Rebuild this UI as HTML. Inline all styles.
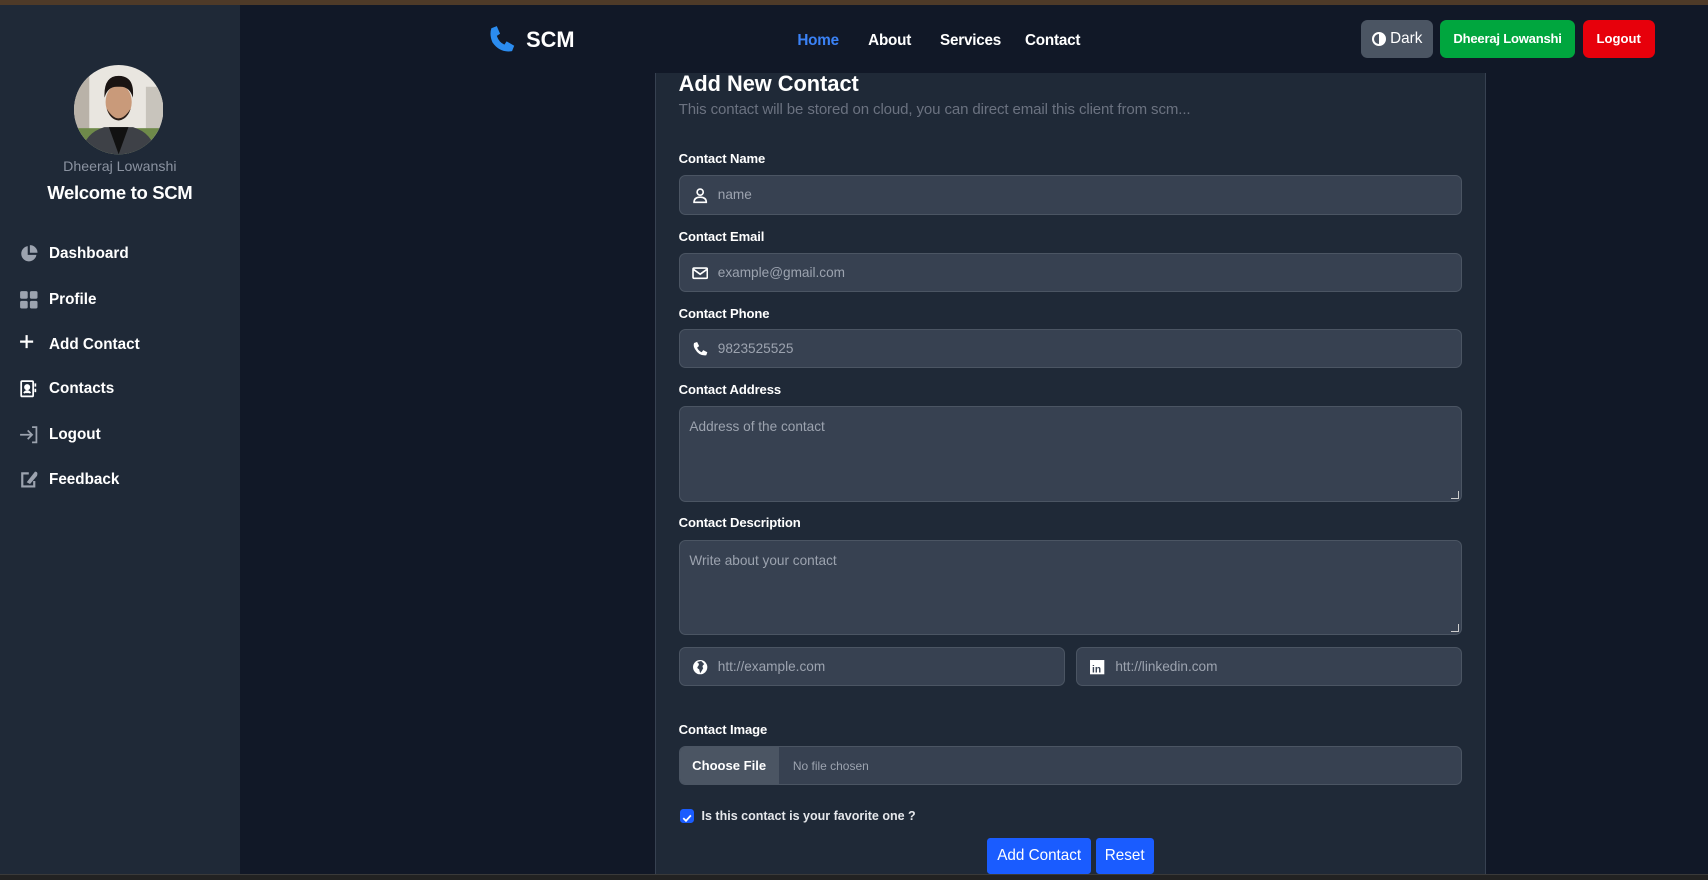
<!DOCTYPE html>
<html><head><meta charset="utf-8"><style>
*{box-sizing:border-box;margin:0;padding:0}
html,body{width:1708px;height:880px;overflow:hidden;background:#111827}
#w{zoom:1.08929;width:1568px;height:808px;position:relative;font-family:"Liberation Sans",sans-serif;color:#fff;background:#111827;overflow:hidden}
.a{position:absolute}
.top{left:0;top:0;width:1568px;height:5px;background:#4e3a28}
.bot{left:0;top:802px;width:1568px;height:6px;background:#222;border-top:1px solid #3a3a3a}
.side{left:0;top:5px;width:220px;height:797px;background:#1f2937}
.mi{position:absolute;left:17px;font-size:14px;font-weight:bold;display:flex;align-items:center}
.mi svg{width:18px;height:18px;margin-right:10px}
.nav{font-size:14px;font-weight:bold;top:29px;letter-spacing:-0.2px}
.btn{top:18px;height:35px;border-radius:6px;font-size:12px;font-weight:bold;display:flex;align-items:center;justify-content:center}
.card{left:601px;top:67px;width:763px;height:735px;background:#1f2937;border-left:1px solid #374151;border-right:1px solid #374151}
.lbl{left:623px;font-size:12px;font-weight:bold;letter-spacing:-0.1px;margin-top:1px}
.in{left:623px;width:719px;height:36px;background:#374151;border:1px solid #4b5563;border-radius:6px;font-size:12.5px;color:#9ca3af;display:flex;align-items:center;padding-left:35px}
.in svg{position:absolute;left:11px;top:10px;width:15px;height:15px}
.ta{align-items:flex-start;padding:11px 9px}
.ta:after{content:"";position:absolute;right:2px;bottom:2px;width:6px;height:6px;border-right:1px solid #ccc;border-bottom:1px solid #ccc}
</style></head><body><div id="w">
<div class="a top"></div>
<div class="a side">
 <svg class="a" style="left:68px;top:55px" width="82" height="82" viewBox="0 0 82 82"><defs><clipPath id="c"><circle cx="41" cy="41" r="41"/></clipPath></defs><g clip-path="url(#c)"><rect width="82" height="82" fill="#e9e6e0"/><rect x="0" y="10" width="14" height="60" fill="#b9b2a8"/><rect x="66" y="20" width="16" height="50" fill="#c8c4bc"/><rect x="0" y="58" width="82" height="24" fill="#6f8a4a"/><path d="M6 82 Q10 62 28 57 L54 57 Q72 62 76 82Z" fill="#3e4147"/><path d="M32 57 L41 82 L50 57Z" fill="#111"/><ellipse cx="41" cy="34" rx="12" ry="16" fill="#c99a7a"/><path d="M28 30 Q27 10 41 10 Q56 10 54 30 Q51 19 41 20 Q31 19 28 30Z" fill="#1a1412"/><path d="M30 40 Q41 58 52 40 Q49 50 41 51 Q33 50 30 40Z" fill="#2a1e18"/></g></svg>
 <div class="a" style="left:0;width:220px;top:141px;text-align:center;font-size:13px;color:#8b93a1">Dheeraj Lowanshi</div>
 <div class="a" style="left:0;width:220px;top:162px;text-align:center;font-size:17px;font-weight:bold;letter-spacing:-0.3px">Welcome to SCM</div>
 <div class="mi" style="top:219px"><svg viewBox="0 0 18 18"><path d="M8 2 A7 7 0 1 0 16 10 L8 10Z" fill="#9ca3af"/><path d="M10 1 A7 7 0 0 1 17 8 L10 8Z" fill="#9ca3af"/></svg>Dashboard</div>
 <div class="mi" style="top:261px"><svg viewBox="0 0 18 18" fill="#9ca3af"><rect x="1" y="1" width="7" height="7" rx="1.5"/><rect x="10" y="1" width="7" height="7" rx="1.5"/><rect x="1" y="10" width="7" height="7" rx="1.5"/><rect x="10" y="10" width="7" height="7" rx="1.5"/></svg>Profile</div>
 <div class="mi" style="top:302px"><svg viewBox="0 0 18 18"><path d="M7 1v12M1 7h12" stroke="#fff" stroke-width="2"/></svg>Add Contact</div>
 <div class="mi" style="top:343px"><svg viewBox="0 0 18 18" fill="none" stroke="#fff" stroke-width="1.6"><rect x="2" y="2" width="11" height="14" rx="1"/><circle cx="7.5" cy="7.5" r="2" fill="#fff"/><path d="M4.5 13 Q7.5 9 10.5 13" fill="#fff"/><path d="M15 4v3M15 9v3"/></svg>Contacts</div>
 <div class="mi" style="top:385px"><svg viewBox="0 0 18 18" fill="none" stroke="#9ca3af" stroke-width="1.6"><path d="M1 9h10M8 5l4 4-4 4M12 2h4v14h-4"/></svg>Logout</div>
 <div class="mi" style="top:426px"><svg viewBox="0 0 18 18" fill="#9ca3af"><path d="M2 3h7v2h-5v10h9v-4h2v6H2z"/><path d="M8 12 L15 3 Q17 3 16 6 L10 13Z" stroke="#9ca3af" fill="#9ca3af" stroke-width="1.2"/></svg>Feedback</div>
</div>
<svg class="a" style="left:447px;top:23px" width="26" height="26" viewBox="0 0 26 26"><path d="M4 3 L9 1 L12 8 L9 10 Q11 16 16 18 L18 15 L25 19 L23 24 Q12 26 5 16 Q2 9 4 3Z" fill="#2b8cf0"/></svg>
<div class="a" style="left:483px;top:25px;font-size:20px;font-weight:bold">SCM</div>
<div class="a nav" style="left:732px;color:#3b82f6">Home</div>
<div class="a nav" style="left:797px">About</div>
<div class="a nav" style="left:863px">Services</div>
<div class="a nav" style="left:941px">Contact</div>
<div class="a btn" style="left:1249px;width:67px;background:#4b5563;font-size:14px;font-weight:normal"><span style="display:inline-block;width:13px;height:13px;border-radius:50%;border:2px solid #fff;background:linear-gradient(90deg,#4b5563 50%,#fff 50%);margin-right:4px"></span>Dark</div>
<div class="a btn" style="left:1322px;width:124px;background:#00a63e;letter-spacing:-0.2px">Dheeraj Lowanshi</div>
<div class="a btn" style="left:1453px;width:66px;background:#e7000b">Logout</div>
<div class="a card"></div>
<div class="a" style="left:623px;top:65px;font-size:20px;font-weight:bold">Add New Contact</div>
<div class="a" style="left:623px;top:93px;font-size:13.8px;color:#6b7280;letter-spacing:-0.1px">This contact will be stored on cloud, you can direct email this client from scm...</div>
<div class="a lbl" style="top:138px">Contact Name</div>
<div class="a in" style="top:161px"><svg viewBox="0 0 16 16" fill="none" stroke="#fff" stroke-width="1.6"><circle cx="8" cy="5" r="3"/><path d="M2 15 Q2 10 8 10 Q14 10 14 15Z"/></svg>name</div>
<div class="a lbl" style="top:209px">Contact Email</div>
<div class="a in" style="top:232px"><svg viewBox="0 0 16 16" fill="none" stroke="#fff" stroke-width="1.6"><rect x="1" y="3" width="14" height="10" rx="1"/><path d="M1 4l7 5 7-5"/></svg>example@gmail.com</div>
<div class="a lbl" style="top:280px">Contact Phone</div>
<div class="a in" style="top:302px"><svg viewBox="0 0 16 16"><path d="M2 2 L5 1 L7 5 L5 6.5 Q6.5 10 9.5 11 L11 9 L15 11 L14 14 Q7 15 3 8 Q1 5 2 2Z" fill="#fff"/></svg>9823525525</div>
<div class="a lbl" style="top:350px">Contact Address</div>
<div class="a in ta" style="top:373px;height:88px">Address of the contact</div>
<div class="a lbl" style="top:472px">Contact Description</div>
<div class="a in ta" style="top:496px;height:87px">Write about your contact</div>
<div class="a in" style="top:594px;width:355px"><svg viewBox="0 0 16 16"><circle cx="8" cy="8" r="7" fill="#fff"/><path d="M5 3 Q8 5 6 7 Q4 9 7 10 L8 14 Q10 11 11 9 Q9 7 12 5 Q10 3 9 2Z" fill="#374151"/></svg>htt://example.com</div>
<div class="a in" style="top:594px;left:988px;width:354px"><svg viewBox="0 0 16 16"><rect x="1" y="1" width="14" height="14" fill="#fff"/><text x="3" y="13" font-size="10" font-weight="bold" fill="#374151" font-family="Liberation Sans">in</text></svg>htt://linkedin.com</div>
<div class="a lbl" style="top:662px">Contact Image</div>
<div class="a in" style="top:685px;padding-left:0;overflow:hidden;font-size:11px"><div style="width:91px;height:100%;background:#4b5563;color:#fff;font-weight:bold;font-size:12px;display:flex;align-items:center;justify-content:center;margin-right:13px">Choose File</div>No file chosen</div>
<div class="a" style="left:624px;top:743px;width:13px;height:13px;background:#1a5cff;border-radius:3px"><svg width="13" height="13" viewBox="0 0 13 13"><path d="M3 6.5l2.5 2.5 4.5-5" stroke="#fff" stroke-width="1.6" fill="none"/></svg></div>
<div class="a" style="left:644px;top:743px;font-size:11.5px;font-weight:bold;color:#e5e7eb">Is this contact is your favorite one ?</div>
<div class="a" style="left:906px;top:769px;width:96px;height:33px;background:#1a5cff;border-radius:3px;font-size:14px;display:flex;align-items:center;justify-content:center">Add Contact</div>
<div class="a" style="left:1006px;top:769px;width:53px;height:33px;background:#1a5cff;border-radius:3px;font-size:14px;display:flex;align-items:center;justify-content:center">Reset</div>
<div class="a bot"></div>
</div></body></html>
